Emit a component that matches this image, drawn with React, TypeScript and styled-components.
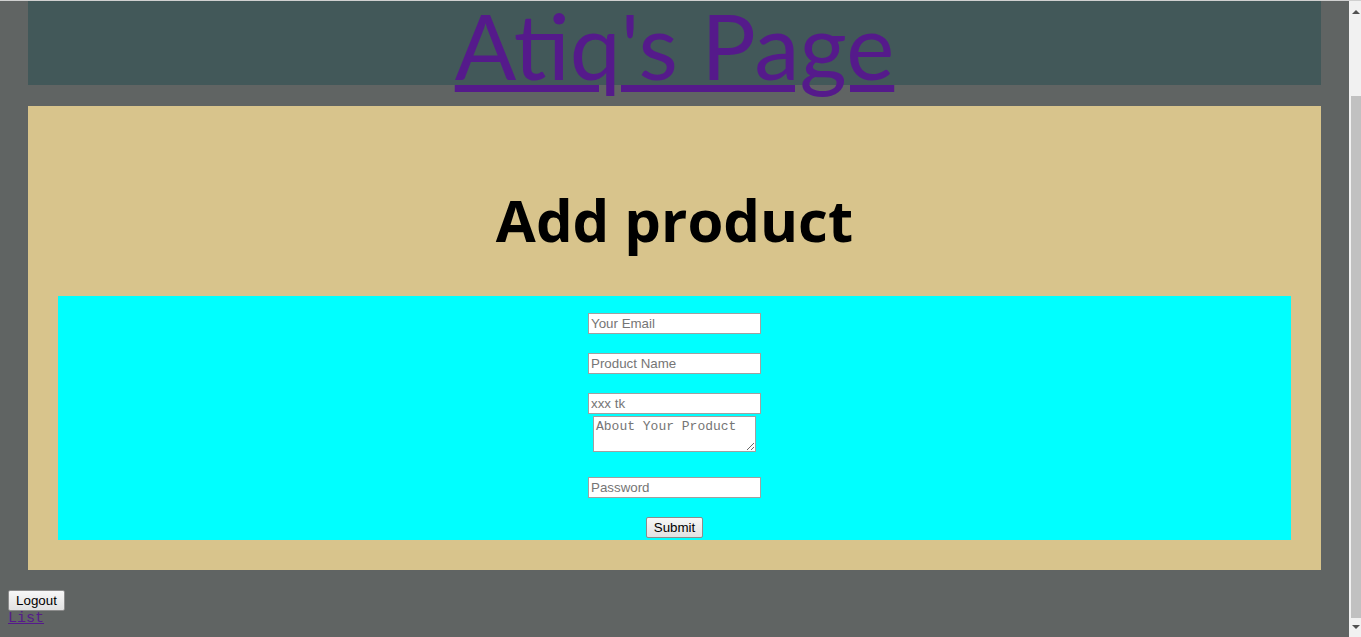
import React from "react";
import styled, { createGlobalStyle } from "styled-components";

const Global = createGlobalStyle`
  html, body {
    margin: 0;
    padding: 0;
    background: #606463;
  }
  body {
    font-family: "Liberation Sans", Arial, sans-serif;
  }
  * { box-sizing: border-box; }
`;

const Frame = styled.div`
  display: grid;
  grid-template-columns: 1fr 12px;
  height: 637px;
  overflow: hidden;
  border-top: 1px solid #d0d0d0;
`;

const Main = styled.div`
  display: flex;
  flex-direction: column;
  padding: 0 8px;
  min-width: 0;
`;

const Header = styled.header`
  margin: 0 20px;
  height: 84px;
  background: #425859;
  display: flex;
  justify-content: center;
  overflow: visible;
`;

const SiteTitle = styled.h1`
  margin: 0;
  padding-top: 9px;
  font-family: "Lato", "Open Sans", sans-serif;
  font-weight: 400;
  font-size: 91px;
  line-height: 70px;
  white-space: nowrap;
`;

const TitleLink = styled.a`
  color: #551a8b;
  text-decoration: underline;
  text-decoration-thickness: 7px;
  text-underline-offset: 5px;
  text-decoration-skip-ink: auto;
`;

const Card = styled.section`
  margin: 21px 20px 0;
  background: #d8c48c;
  padding: 0 30px 30px;
`;

const PageHeading = styled.h2`
  margin: 0;
  height: 190px;
  padding-top: 73px;
  text-align: center;
  font-family: "Open Sans", "Noto Sans", sans-serif;
  font-weight: 700;
  font-size: 58px;
  line-height: 82px;
  color: #000;
`;

const FormPanel = styled.form`
  background: #00ffff;
  display: flex;
  flex-direction: column;
  align-items: center;
  padding: 17px 0 2px;
`;

const Field = styled.input<{ $gap?: number }>`
  width: 173px;
  height: 21px;
  margin-top: ${(p) => p.$gap ?? 0}px;
  padding: 1px 2px;
  border: 1px solid #a0a0a0;
  background: #fff;
  font-family: "Liberation Sans", Arial, sans-serif;
  font-size: 13.33px;
  color: #000;
  &::placeholder {
    color: #757575;
  }
`;

const AboutArea = styled.textarea<{ $gap?: number }>`
  width: 163px;
  height: 36px;
  margin-top: ${(p) => p.$gap ?? 0}px;
  padding: 2px;
  border: 1px solid #a0a0a0;
  background: #fff;
  font-family: "Liberation Mono", "DejaVu Sans Mono", monospace;
  font-size: 13px;
  resize: both;
  &::placeholder {
    color: #757575;
  }
`;

const Button = styled.button<{ $gap?: number; $width: number }>`
  width: ${(p) => p.$width}px;
  height: 21px;
  margin-top: ${(p) => p.$gap ?? 0}px;
  padding: 0;
  border: 1px solid #8c8c8c;
  border-radius: 2px;
  background: linear-gradient(#f7f7f7, #e1e1e1);
  font-family: "Liberation Sans", Arial, sans-serif;
  font-size: 13.33px;
  color: #000;
`;

const Footer = styled.div`
  display: flex;
  flex-direction: column;
  align-items: flex-start;
  margin-top: 20px;
`;

const ListLink = styled.a`
  font-family: "Liberation Mono", "Courier New", monospace;
  font-size: 15px;
  line-height: 16px;
  color: #551a8b;
  text-decoration: underline;
`;

const Scrollbar = styled.div`
  display: flex;
  flex-direction: column;
  background: #f1f1f1;
`;

const ArrowBox = styled.div<{ $down?: boolean }>`
  height: 17px;
  display: flex;
  justify-content: center;
  align-items: center;
  padding-left: 2px;
  padding-top: ${(p) => (p.$down ? 0 : 5)}px;
  padding-bottom: ${(p) => (p.$down ? 4 : 0)}px;
`;

const Triangle = styled.span<{ $down?: boolean }>`
  width: 0;
  height: 0;
  border-left: 4px solid transparent;
  border-right: 4px solid transparent;
  ${(p) =>
    p.$down
      ? "border-top: 4px solid #505050;"
      : "border-bottom: 4px solid #505050;"}
`;

const Track = styled.div`
  flex: 1;
  display: flex;
  flex-direction: column;
`;

const Thumb = styled.div`
  margin: 78px 0 0 2px;
  height: 522px;
  background: #c1c1c1;
`;

export default function App() {
  return (
    <>
      <Global />
      <Frame>
        <Main>
          <Header>
            <SiteTitle>
              <TitleLink href="#">Atiq's Page</TitleLink>
            </SiteTitle>
          </Header>
          <Card>
            <PageHeading>Add product</PageHeading>
            <FormPanel onSubmit={(e) => e.preventDefault()}>
              <Field type="email" placeholder="Your Email" />
              <Field $gap={19} type="text" placeholder="Product Name" />
              <Field $gap={19} type="text" placeholder="xxx tk" />
              <AboutArea $gap={2} placeholder="About Your Product" />
              <Field $gap={25} type="password" placeholder="Password" />
              <Button $gap={19} $width={57} type="submit">
                Submit
              </Button>
            </FormPanel>
          </Card>
          <Footer>
            <Button $width={57} type="button">
              Logout
            </Button>
            <ListLink href="#">List</ListLink>
          </Footer>
        </Main>
        <Scrollbar>
          <ArrowBox>
            <Triangle />
          </ArrowBox>
          <Track>
            <Thumb />
          </Track>
          <ArrowBox $down>
            <Triangle $down />
          </ArrowBox>
        </Scrollbar>
      </Frame>
    </>
  );
}
